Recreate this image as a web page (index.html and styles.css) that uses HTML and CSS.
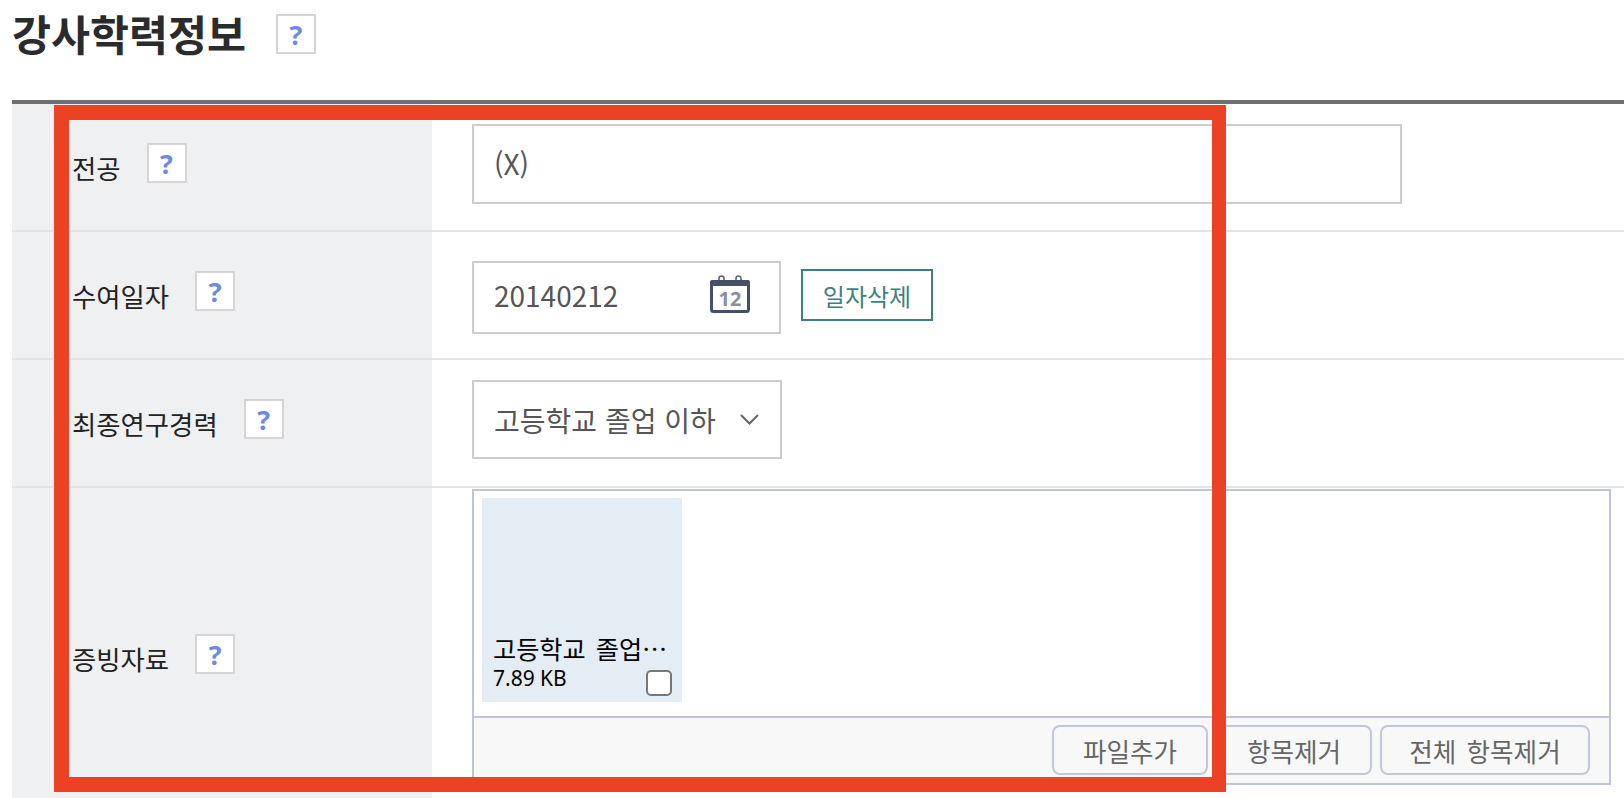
FILE: index.html
```html
<!DOCTYPE html>
<html lang="ko">
<head>
<meta charset="utf-8">
<title>강사학력정보</title>
<link rel="stylesheet" href="styles.css">
</head>
<body>
<header class="page-head">
  <h1 class="page-title">강사학력정보</h1>
  <span class="help help-title">?</span>
</header>
<section class="form">
  <div class="row row-major">
    <div class="label"><span>전공</span><span class="help">?</span></div>
    <div class="field">
      <div class="input input-wide">(X)</div>
    </div>
  </div>
  <div class="row row-date">
    <div class="label"><span>수여일자</span><span class="help">?</span></div>
    <div class="field">
      <div class="input input-date">
        <span>20140212</span>
        <svg class="cal" width="40" height="38" viewBox="0 0 40 38" aria-hidden="true">
          <path d="M9 6V3.5a2.5 2.5 0 0 1 5 0V6M26 6V3.500a2.500 2.500 0 0 1 5 0V6" fill="none" stroke="#59627a" stroke-width="1.600"/>
          <rect x="1.500" y="6.500" width="37" height="30" rx="2" fill="#fff" stroke="#454f66" stroke-width="3"/>
          <rect x="0" y="5" width="40" height="6" rx="2" fill="#454f66"/>
          <text class="cal-num" x="20" y="31" text-anchor="middle">12</text>
        </svg>
      </div>
      <button class="btn-date" type="button">일자삭제</button>
    </div>
  </div>
  <div class="row row-degree">
    <div class="label"><span>최종연구경력</span><span class="help">?</span></div>
    <div class="field">
      <div class="input input-select">
        <span>고등학교 졸업 이하</span>
        <svg class="chev" width="19" height="11" viewBox="0 0 19 11" aria-hidden="true">
          <path d="M1 1l8.500 8.500L18 1" fill="none" stroke="#666" stroke-width="2"/>
        </svg>
      </div>
    </div>
  </div>
  <div class="row row-proof">
    <div class="label"><span>증빙자료</span><span class="help">?</span></div>
    <div class="field">
      <div class="filebox">
        <div class="filelist">
          <div class="thumb">
            <div class="thumb-name">고등학교 졸업…</div>
            <div class="thumb-size">7.89 KB</div>
            <input class="thumb-check" type="checkbox">
          </div>
        </div>
        <div class="toolbar">
          <button class="tool" type="button">파일추가</button>
          <button class="tool" type="button">항목제거</button>
          <button class="tool tool-all" type="button">전체 항목제거</button>
        </div>
      </div>
    </div>
  </div>
</section>
<div class="highlight"></div>
</body>
</html>
```
FILE: styles.css
```css
html, body {
  margin: 0;
  height: 798px;
  overflow: hidden;
  background: #fff;
}
body {
  font-family: "Noto Sans CJK KR", "Noto Sans", sans-serif;
  color: #222;
}
.page-head {
  height: 100px;
  padding-left: 12px;
  display: flex;
  align-items: flex-start;
}
.page-title {
  margin: 0;
  font-size: 42.4px;
  line-height: 66px;
  font-weight: 700;
  color: #2a2b2d;
}
.help {
  box-sizing: border-box;
  width: 40px;
  height: 40px;
  margin-left: 26px;
  margin-bottom: 9px;
  border: 2px solid #d5d5d8;
  background: #fff;
  color: #6b8ae6;
  font-family: "Open Sans", sans-serif;
  font-weight: 700;
  font-size: 27px;
  line-height: 38px;
  text-align: center;
}
.help-title {
  margin-top: 14px;
  margin-left: 30px;
}
.form {
  margin-left: 12px;
  border-top: 4px solid #6f6f6f;
}
.row {
  display: grid;
  grid-template-columns: 420px 1fr;
  border-bottom: 2px solid #e2e3e5;
  box-sizing: border-box;
}
.row-major { height: 128px; }
.row-date { height: 128px; }
.row-degree { height: 128px; }
.row-proof { height: 340px; border-bottom: 0; }
.label {
  background: #eff0f2;
  padding-left: 60px;
  display: flex;
  align-items: center;
  font-size: 26.4px;
  color: #222;
}
.field {
  padding-left: 40px;
  display: flex;
  align-items: flex-start;
}
.row-major .field { padding-top: 20px; }
.row-date .field { padding-top: 29px; }
.row-degree .field { padding-top: 20px; }
.row-proof .field { padding-top: 1px; }
.input {
  box-sizing: border-box;
  border: 2px solid #cccdd2;
  padding-left: 20px;
  display: flex;
  align-items: center;
  font-size: 28px;
  color: #555;
  background: #fff;
}
.input-wide { width: 930px; height: 80px; padding-bottom: 2px; }
.input-date {
  width: 309px;
  height: 73px;
  justify-content: space-between;
  padding-right: 29px;
  padding-bottom: 6px;
}
.cal { display: block; margin-top: -2px; }
.cal-num {
  font-family: "Noto Sans", sans-serif;
  font-size: 20px;
  font-weight: 700;
  fill: #8a8f9e;
}
.input-select {
  width: 310px;
  height: 79px;
  justify-content: space-between;
  padding-right: 21px;
}
.chev { display: block; }
.btn-date {
  box-sizing: border-box;
  width: 132px;
  height: 52px;
  margin: 8px 0 0 20px;
  padding: 0;
  border: 2px solid #3f7f80;
  background: #fff;
  color: #3f7f80;
  font-family: inherit;
  font-size: 24px;
}
.filebox {
  box-sizing: border-box;
  width: 1139px;
  height: 296px;
  border: 2px solid #bfc5d6;
  display: flex;
  flex-direction: column;
}
.filelist {
  height: 227px;
  box-sizing: border-box;
  padding: 7px 8px 0;
  border-bottom: 2px solid #bfc5d6;
}
.thumb {
  position: relative;
  box-sizing: border-box;
  width: 200px;
  height: 204px;
  padding: 0 10px 9px 11px;
  background: #e4edf4;
  color: #000;
  display: flex;
  flex-direction: column;
  justify-content: flex-end;
}
.thumb-name {
  font-size: 25.2px;
  line-height: 30px;
  word-spacing: 3px;
  white-space: nowrap;
}
.thumb-size {
  font-family: "Noto Sans", sans-serif;
  font-size: 21px;
  line-height: 30px;
}
.thumb-check {
  position: absolute;
  right: 10px;
  bottom: 6px;
  box-sizing: border-box;
  width: 26px;
  height: 26px;
  margin: 0;
  appearance: none;
  background: #fff;
  border: 2px solid #777;
  border-radius: 5px;
}
.toolbar {
  flex: 1;
  background: #f8f8f8;
  padding: 7px 19px 0 0;
  display: flex;
  justify-content: flex-end;
  align-items: flex-start;
  gap: 8px;
}
.tool {
  box-sizing: border-box;
  width: 156px;
  height: 50px;
  padding: 0;
  border: 2px solid #bfc9da;
  border-radius: 8px;
  background: #f8f8f8;
  color: #666;
  font-family: inherit;
  font-size: 25.6px;
  word-spacing: 3px;
}
.tool-all { width: 210px; }
.highlight {
  position: absolute;
  left: 54px;
  top: 105px;
  width: 1172px;
  height: 687px;
  box-sizing: border-box;
  border-style: solid;
  border-color: #ec4125;
  border-width: 15px 14px 15px 15px;
  pointer-events: none;
}
```
